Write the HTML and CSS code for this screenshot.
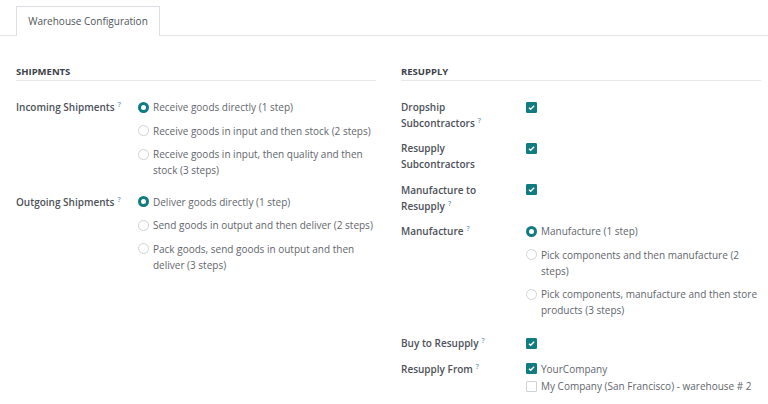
FILE: index.html
```html
<!DOCTYPE html>
<html>
<head>
<meta charset="utf-8">
<link rel="stylesheet" href="styles.css">
</head>
<body>
<div class="tabs">
  <div class="tab">Warehouse Configuration</div>
</div>
<div class="page">
  <section class="group">
    <h3 class="group-title">SHIPMENTS</h3>
    <div class="rows rows-left">
      <div class="row">
        <div class="label">Incoming Shipments<sup class="help">?</sup></div>
        <div class="field">
          <div class="opt"><span class="radio on"></span><span class="otext">Receive goods directly (1 step)</span></div>
          <div class="opt"><span class="radio"></span><span class="otext">Receive goods in input and then stock (2 steps)</span></div>
          <div class="opt"><span class="radio"></span><span class="otext">Receive goods in input, then quality and then stock (3 steps)</span></div>
        </div>
      </div>
      <div class="row">
        <div class="label">Outgoing Shipments<sup class="help">?</sup></div>
        <div class="field">
          <div class="opt"><span class="radio on"></span><span class="otext">Deliver goods directly (1 step)</span></div>
          <div class="opt"><span class="radio"></span><span class="otext">Send goods in output and then deliver (2 steps)</span></div>
          <div class="opt"><span class="radio"></span><span class="otext">Pack goods, send goods in output and then deliver (3 steps)</span></div>
        </div>
      </div>
    </div>
  </section>
  <section class="group">
    <h3 class="group-title">RESUPPLY</h3>
    <div class="rows rows-right">
      <div class="row">
        <div class="label">Dropship Subcontractors<sup class="help">?</sup></div>
        <div class="field"><span class="check on"></span></div>
      </div>
      <div class="row">
        <div class="label">Resupply Subcontractors</div>
        <div class="field"><span class="check on"></span></div>
      </div>
      <div class="row">
        <div class="label">Manufacture to Resupply<sup class="help">?</sup></div>
        <div class="field"><span class="check on"></span></div>
      </div>
      <div class="row">
        <div class="label">Manufacture<sup class="help">?</sup></div>
        <div class="field">
          <div class="opt"><span class="radio on"></span><span class="otext">Manufacture (1 step)</span></div>
          <div class="opt"><span class="radio"></span><span class="otext">Pick components and then manufacture (2 steps)</span></div>
          <div class="opt"><span class="radio"></span><span class="otext">Pick components, manufacture and then store products (3 steps)</span></div>
        </div>
      </div>
      <div class="row">
        <div class="label">Buy to Resupply<sup class="help">?</sup></div>
        <div class="field"><span class="check on"></span></div>
      </div>
      <div class="row">
        <div class="label">Resupply From<sup class="help">?</sup></div>
        <div class="field">
          <div class="copt"><span class="check on"></span><span class="otext">YourCompany</span></div>
          <div class="copt"><span class="check"></span><span class="otext">My Company (San Francisco) - warehouse # 2</span></div>
        </div>
      </div>
    </div>
  </section>
</div>
</body>
</html>
```
FILE: styles.css
```css
html, body { margin: 0; padding: 0; background: #fff; }
body {
  font-family: "Open Sans", "Noto Sans", sans-serif;
  font-size: 10px;
  color: #4b4f56;
  width: 768px;
  height: 404px;
  overflow: hidden;
}
.tabs {
  margin-top: 6px;
  padding-left: 16px;
  border-bottom: 1px solid #e3e6ea;
  display: flex;
  height: 29px;
}
.tab {
  width: 144px;
  height: 30px;
  box-sizing: border-box;
  border: 1px solid #dcdfe3;
  border-bottom: none;
  background: #fff;
  margin-bottom: -1px;
  display: flex;
  align-items: center;
  justify-content: center;
  padding-bottom: 1px;
  color: #50555b;
  font-size: 10px;
}
.page {
  display: grid;
  grid-template-columns: 360px 360px;
  column-gap: 25px;
  padding: 0 0 0 16px;
}
.group-title {
  margin: 30px 0 0;
  font-size: 9.5px;
  font-weight: 700;
  color: #3b4049;
  line-height: 12px;
  padding-bottom: 2px;
  border-bottom: 1px solid #e6e8eb;
}
.rows { display: flex; flex-direction: column; padding-top: 18px; }
.rows-left { row-gap: 8px; }
.rows-right { row-gap: 9.4px; }
.row { display: flex; }
.rows-left .label { width: 122px; flex: none; }
.rows-right .label { width: 125px; flex: none; padding-right: 40px; }
.label {
  line-height: 16px;
  font-weight: 600;
  color: #4d5158;
  padding-right: 8px;
  box-sizing: border-box;
}
.help {
  font-size: 7px;
  color: #6f9db4;
  font-weight: 600;
  margin-left: 3px;
  vertical-align: baseline;
  line-height: 0;
  position: relative;
  top: -4px;
}
.field { flex: 1; min-width: 0; }
.opt { display: flex; align-items: flex-start; margin-bottom: 7.6px; }
.otext { line-height: 16px; color: #62666c; }
.radio {
  flex: none;
  width: 11px;
  height: 11px;
  box-sizing: border-box;
  border-radius: 50%;
  border: 1px solid #cfd3d7;
  margin: 2.5px 4px 0 0;
  background: #fff;
}
.radio.on { border: 3.5px solid #107c82; }
.check {
  display: block;
  flex: none;
  width: 11px;
  height: 11px;
  box-sizing: border-box;
  border-radius: 1px;
  border: 1px solid #cfd3d7;
  background: #fff;
  margin-top: 2.5px;
}
.check.on {
  border-color: #107c82;
  background: #107c82 url("data:image/svg+xml,%3Csvg xmlns='http://www.w3.org/2000/svg' viewBox='0 0 11 11'%3E%3Cpath d='M3 5.7l1.7 1.6 3.4-3.5' fill='none' stroke='white' stroke-width='1.5'/%3E%3C/svg%3E") center/11px 11px no-repeat;
}
.copt { display: flex; align-items: flex-start; height: 17.5px; }
.copt .check { margin-right: 4px; }
```
